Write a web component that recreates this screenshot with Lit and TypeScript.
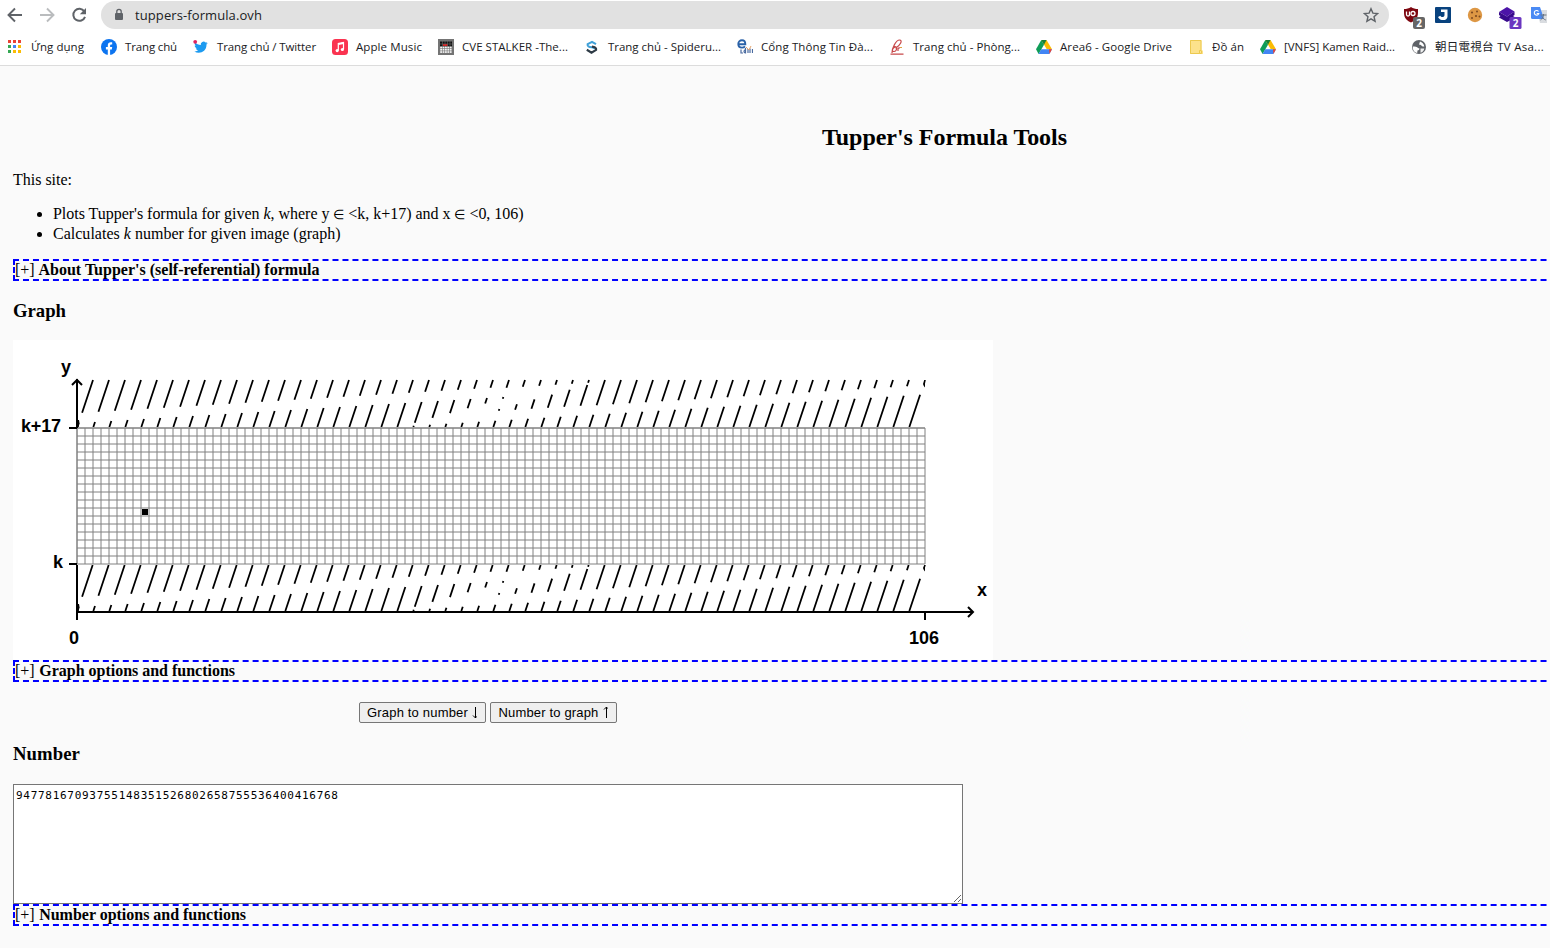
import { LitElement, html, svg, css } from "lit";
import { customElement, property } from "lit/decorators.js";

/** Inline text whose letter spacing is tuned so that it fills a given width. */
@customElement("fit-text")
class FitText extends LitElement {
  @property({ type: Number }) w = 0;
  static styles = css`
    :host { display: inline-block; white-space: nowrap; }
  `;
  firstUpdated() {
    const natural = this.getBoundingClientRect().width;
    const count = (this.textContent ?? "").length || 1;
    this.style.letterSpacing = `${((this.w - natural) / count).toFixed(4)}px`;
  }
  render() {
    return html`<slot></slot>`;
  }
}

const drive = svg`
  <path d="M5.3 1h5.2L16 10.3h-5.2z" fill="#fbbc04"/>
  <path d="M5.3 1 0 10.3 2.6 15 8 5.8z" fill="#0f9d58"/>
  <path d="M5.2 10.3H16L13.4 15H2.6z" fill="#4285f4"/>
  <path d="M13 10.3h3L13.4 15z" fill="#ea4335"/>
  <path d="M5.3 1h5.2L8 5.8z" fill="#188038"/>`;

const icons = {
  apps: svg`${[0, 1, 2].map((r) => [0, 1, 2].map((c) => svg`<rect x=${1 + c * 5} y=${1 + r * 5} width="3" height="3"
    fill=${[["#ea4335", "#ea4335", "#ea4335"], ["#34a853", "#4285f4", "#fbbc04"], ["#34a853", "#fbbc04", "#fbbc04"]][r][c]}/>`))}`,
  facebook: svg`<circle cx="8" cy="8" r="8" fill="#0c74f0"/>
    <path d="M6.8 16v-5.5H4.9V8.1h1.9V6.5c0-2.1 1.2-3.2 3-3.2.8 0 1.4.1 1.4.1v2h-.9c-1 0-1.2.6-1.2 1.2v1.5h2.1l-.4 2.4H9.1V16z" fill="#fff"/>`,
  twitter: svg`<path d="M14.8 3.9c-.5.3-1 .4-1.6.5.6-.4.9-.9 1.1-1.5-.5.3-1.1.5-1.7.6a2.8 2.8 0 0 0-4.8 2.5C5.6 5.9 3.6 4.9 2.1 3.2c-.8 1.4-.4 3 .8 3.8-.5 0-.9-.1-1.2-.4 0 1.4 1 2.5 2.3 2.8-.5.1-.9.1-1.2 0 .4 1.1 1.4 1.9 2.6 1.900-1.1.9-2.6 1.300-4.1 1.100 4.800 2.900 12.200.8 12.200-7 .5-.4 1-.9 1.300-1.500z" fill="#1d9bf0"/>
    <circle cx="2.2" cy="2.800" r="1.900" fill="#e0245e"/>`,
  music: svg`<rect width="16" height="16" rx="3.500" fill="#fa3350"/>
    <path d="M6.300 11.500V4.600l5.200-1.200v6.800" fill="none" stroke="#fff" stroke-width="1.200"/><path d="M6.300 5.300l5.200-1.200" stroke="#fff" stroke-width="1.600"/>
    <circle cx="5.200" cy="11.600" r="1.600" fill="#fff"/><circle cx="10.400" cy="10.500" r="1.600" fill="#fff"/>`,
  cve: svg`<rect width="16" height="16" fill="#747474"/>
    <rect x="2" y="2.500" width="12" height="5" fill="#111"/><rect x="5" y="5" width="4.500" height="2" fill="#d11"/>
    <path d="M4.500 2v12M7 2v12M9.500 2v12M12 2v12M2 5h12" stroke="#777" stroke-width=".5"/>
    ${[0, 1, 2].map((r) => [0, 1, 2, 3, 4].map((c) => svg`<rect x=${2.2 + c * 2.4} y=${7.6 + r * 2.3} width="1.800" height="1.700" fill="#f4f4f4"/>`))}`,
  spider: svg`<path d="M12 5.200 8 2.800 3.600 5.200c-.4 2 1.200 2.800 4.200 3l3.500 1.500" fill="none" stroke="#3fa0d8" stroke-width="2"/>
    <path d="M2.800 10.800 7.500 13.600l4.600-2.700c.4-2-1.200-2.800-4.200-3.200" fill="none" stroke="#2e3b46" stroke-width="2.200"/>`,
  eduport: svg`<path d="M2 5.200h6.300C8.300 2.500 7.200 1.200 5 1.200 2.800 1.200 1.300 3 1.300 5s1.500 3.600 3.700 3.600c1.300 0 2.300-.5 3-1.300" fill="none" stroke="#2b62a8" stroke-width="1.900"/>
    <path d="M4 10.500v3.500h2M8.500 10.500c-2 .5-2 3.500 0 3.500V9M11 10v4M13 9.500v4.500M15.500 10v4" fill="none" stroke="#4a6ba0" stroke-width="1.200"/><path d="M9 8l3 3 2-4" stroke="#e5a36c" fill="none"/>`,
  phong: svg`<path d="M3 14C3 9 7 1 10.500 1S11.500 6 6.500 9.300M4.500 8c4-2 4 4.500.5 4.500S4 9 6 8M9 12V9.500c1-1 2-.5 2-.5M1.500 15.200h13" fill="none" stroke="#c8494b" stroke-width="1.200"/><path d="M11 8.500h2" stroke="#e0a040"/>`,
  drive,
  folder: svg`<path d="M2 1h11.500v10.500H15V15H2z" fill="#fde38d"/><path d="M2.500 1.500h10.500v10h-1.500v3H2.500z" fill="#fce28c" stroke="#ecc94f"/><path d="M11.500 14.500h2v-3" stroke="#ecc94f" fill="none"/>`,
  globe: svg`<circle cx="8" cy="8" r="7" fill="#5f6368"/>
    <path d="M9 2.500c2 .5 4 2.500 4.300 5-1.800.2-3-.5-3.300-1.500L8 5.500zM1.800 7.500c2 0 4.700.3 5.200 1.500l1.500.5-.5 1.500-1.500.5-.3 2.500C3.500 13.500 1.500 11 1.800 7.500z" fill="#fff"/>
    <path d="M9.500 9.500h3.800c-.3 2-1.800 3.700-3.800 4.300z" fill="#fff" opacity=".9"/>`,
};

type Mark = { icon: keyof typeof icons; label: string; w: number };
const marks: Mark[] = [
  { icon: "apps", label: "Ứng dụng", w: 53 },
  { icon: "facebook", label: "Trang chủ", w: 52 },
  { icon: "twitter", label: "Trang chủ / Twitter", w: 99 },
  { icon: "music", label: "Apple Music", w: 66 },
  { icon: "cve", label: "CVE STALKER -The...", w: 106 },
  { icon: "spider", label: "Trang chủ - Spideru...", w: 113 },
  { icon: "eduport", label: "Cổng Thông Tin Đà...", w: 112 },
  { icon: "phong", label: "Trang chủ - Phòng...", w: 107 },
  { icon: "drive", label: "Area6 - Google Drive", w: 112 },
  { icon: "folder", label: "Đồ án", w: 32 },
  { icon: "drive", label: "[VNFS] Kamen Raid...", w: 111 },
  { icon: "globe", label: "朝日電視台 TV Asa...", w: 109 },
];

@customElement("browser-bar")
class BrowserBar extends LitElement {
  static styles = css`
    :host { display: block; height: 65px; background: #fff; border-bottom: 1px solid #dcdcdc; font-family: "Open Sans", "Noto Sans CJK TC", sans-serif; color: #202124; }
    svg { display: block; flex: none; }
    .nav { display: flex; align-items: center; height: 30px; padding-left: 7px; }
    .arrows { display: flex; gap: 16px; width: 94px; flex: none; }
    .pill { display: flex; align-items: center; width: 1288px; height: 28px; border-radius: 14px; background: #e1e1e1; box-sizing: border-box; padding: 0 10px 0 12px; flex: none; font-size: 13px; }
    .lock { margin-right: 10px; }
    .url { flex: 1; line-height: 20px; padding-bottom: 1px; }
    .ext { display: grid; grid-template-columns: 32px 32px 32px 32px 16px; margin-left: 14px; flex: none; }
    .marks { display: grid; grid-template-columns: 94px 92px 139px 106px 146px 153px 152px 147px 152px 72px 151px 140px; padding-left: 7px; height: 34px; align-items: center; font-size: 11.5px; }
    .mark { display: flex; align-items: center; gap: 8px; }
    .badge { font: bold 10px "Open Sans", sans-serif; }
  `;
  render() {
    return html`
      <div class="nav">
        <div class="arrows">
          <svg width="16" height="16" fill="none" stroke="#5f6368" stroke-width="1.900"><path d="M15 8H2M8 1.500 1.500 8 8 14.500"/></svg>
          <svg width="16" height="16" fill="none" stroke="#babcbe" stroke-width="1.900"><path d="M1 8h13M8 1.500 14.500 8 8 14.500"/></svg>
          <svg width="16" height="16"><path d="M13.300 4.400A6 6 0 1 0 14 9.800" fill="none" stroke="#5f6368" stroke-width="2"/><path d="M15 1v6.200H8.800z" fill="#5f6368"/></svg>
        </div>
        <div class="pill">
          <svg class="lock" width="12" height="14"><rect x="2" y="5" width="8" height="7" rx="1" fill="#5f6368"/><path d="M3.800 5.500V3.500a2.200 2.200 0 0 1 4.400 0v2" fill="none" stroke="#5f6368" stroke-width="1.300"/></svg>
          <div class="url"><fit-text .w=${127}>tuppers-formula.ovh</fit-text></div>
          <svg width="16" height="16"><path d="M8 1.700l1.900 4.400 4.700.4-3.600 3.200 1.100 4.700L8 11.900l-4.100 2.500L5 9.700 1.400 6.500l4.700-.4z" fill="none" stroke="#5f6368" stroke-width="1.400"/></svg>
        </div>
        <div class="ext">
          <svg width="24" height="30" viewBox="0 -7 24 30"><path d="M8 0c2 1.500 4.500 2 7 2 0 6 .5 10-7 13.500C.5 12 1 8 1 2c2.500 0 5-.5 7-2z" fill="#7d0710"/><path d="M3.500 4.500v3c0 2 3 2 3 0v-3" fill="none" stroke="#fff" stroke-width="1.300"/><circle cx="10" cy="6.500" r="2" fill="none" stroke="#fff" stroke-width="1.300"/><rect x="10" y="10" width="12" height="12" rx="2" fill="#666"/><text class="badge" x="16" y="19.600" text-anchor="middle" fill="#fff">2</text></svg>
          <svg width="16" height="30" viewBox="0 -7 16 30"><rect width="16" height="16" rx="1" fill="#08427e"/><path d="M6 2.500h6.500v7c0 5-8 4.500-9.500.4l2.300-1.200c.8 2 4.200 1.800 4.200-.8V5H6z" fill="#fff"/></svg>
          <svg width="16" height="30" viewBox="0 -7 16 30"><circle cx="8" cy="8" r="7.200" fill="#dd9744"/><g fill="#7d4a20"><circle cx="5" cy="5.500" r="1.100"/><circle cx="10" cy="4.500" r="1"/><circle cx="9" cy="9" r="1.100"/><circle cx="5" cy="11" r="1"/><circle cx="12.500" cy="9.500" r="1"/></g></svg>
          <svg width="24" height="30" viewBox="0 -7 24 30"><path d="M8 0 15.500 4.500 8 9.500 0 5z" fill="#4c14a8"/><path d="M0 5l8 4.500 7.500-5V8L14 9l1.500 1v1L8 15 0 10.500l1.500-1.500L0 8z" fill="#380a8c"/><rect x="10.500" y="10" width="12" height="12" rx="1.500" fill="#6a36c0"/><text class="badge" x="16.500" y="19.600" text-anchor="middle" fill="#fff">2</text></svg>
          <svg width="16" height="30" viewBox="0 -7 16 30"><path d="M6 3h10v13H9z" fill="#d9dce0"/><path d="M0 0h9l4 12H1.500Q0 12 0 10.500z" fill="#4a8af4"/><path d="M7.500 4.500a2.300 2.300 0 1 0 .3 2H5.700" fill="none" stroke="#fff" stroke-width="1.100"/><path d="M9.500 8h6M12.500 7v1c0 2-1.500 4-3 5M10.800 9.500c1 1.500 2.200 3 4 3.500" fill="none" stroke="#6b7580"/></svg>
        </div>
      </div>
      <div class="marks">
        ${marks.map((m) => html`<div class="mark"><svg width="16" height="16">${icons[m.icon]}</svg><fit-text .w=${m.w}>${m.label}</fit-text></div>`)}
      </div>`;
  }
}

/** Stroke pieces of the hatched bands above and below the plotted range; y counts from the band's top. */
function hatch(top: number, from: number, to: number) {
  const parts: string[] = [];
  for (let n = 0; n <= 52; n++) {
    const piece = (a: number, b: number) => {
      a = Math.max(a, from);
      b = Math.min(b, to);
      if (b - a < 0.3) return;
      const x = (y: number) => (80 + 16 * n - y / 3).toFixed(2);
      parts.push(`M${x(a)} ${(top + a).toFixed(2)}L${x(b)} ${(top + b).toFixed(2)}`);
    };
    if (n < 32) piece(0, n < 26 ? 32.7 - n : 33.7 - n);
    else if (n < 52) piece(0, 57.2 - n);
    if (n <= 26) piece(43 - n, n < 21 ? 99 : 42.7 - 4.8 * (n - 21));
    if (n >= 26 && n <= 31) piece(5 + 4.8 * (31 - n), 56.7 - n);
    if (n >= 21) piece(66.7 - n, 99);
  }
  return parts.join("");
}

@customElement("tupper-graph")
class TupperGraph extends LitElement {
  static styles = css`
    :host { display: block; width: 980px; height: 320px; background: #fff; }
    svg { display: block; }
    .grid { stroke: #808080; stroke-width: 1; }
    .axis { fill: none; stroke: #000; stroke-width: 2; }
    .hatch { fill: none; stroke: #000; stroke-width: 1.8; }
    text { font: bold 18px "Liberation Sans", Arial, sans-serif; }
  `;
  render() {
    const cols = Array.from({ length: 107 }, (_, i) => 64 + i * 8);
    const rows = Array.from({ length: 18 }, (_, i) => 88 + i * 8);
    return html`<svg width="980" height="320">
      <path class="hatch" d=${hatch(40, 0, 47)}/>
      <path class="hatch" d=${hatch(224, 1, 47)}/>
      <path d="M65 80h1l.5 3-.8 4H65zM65 264h1l.5 3-.8 4H65z"/>
      <path d="M911.200 40h1.600l-.8 3.500v4l-1.200-1.500-.8-2zM911.200 225h1.600l-.8 2.500v4l-1.200-1.500-.8-2z"/>
      ${cols.map((x) => svg`<line class="grid" x1=${x} y1="88" x2=${x} y2="224"/>`)}
      ${rows.map((y) => svg`<line class="grid" x1="64" y1=${y} x2="912" y2=${y}/>`)}
      <path class="grid" fill="none" d="M64 224V88H912"/>
      <rect x="129" y="169" width="6" height="6"/>
      <path class="axis" d="M64 88V39M59 45l5-5 5 5M56 88h8M56 224h8M64 225v55M63 272h897M955 267l5 5-5 5M912 272v8"/>
      <text x="48" y="33">y</text>
      <text x="8" y="92" textLength="40">k+17</text>
      <text x="40" y="228">k</text>
      <text x="56" y="304">0</text>
      <text x="896" y="304">106</text>
      <text x="964" y="256">x</text>
    </svg>`;
  }
}

@customElement("app-root")
class AppRoot extends LitElement {
  static styles = css`
    :host { display: block; width: 100%; height: 948px; overflow: hidden; background: #fafafa; color: #000; font: 16px/18px "Liberation Serif", "Times New Roman", serif; }
    .page { width: 1863px; padding: 57px 0 0 13px; }
    h2 { margin: 0 0 20px; font-size: 24px; line-height: 28px; text-align: center; }
    h3 { margin: 20px 0 19px; font-size: 18.72px; line-height: 20px; }
    p { margin: 0; }
    ul { margin: 15px 0; padding-left: 40px; line-height: 20px; }
    .in { font-size: 13px; line-height: 1; }
    .fold { border: 2px dashed #00f; height: 18px; font-weight: bold; }
    .sign { font-weight: normal; margin-right: 0.6px; }
    .buttons { display: flex; gap: 4px; margin: 20px 0 0 346px; }
    button { display: flex; align-items: center; justify-content: center; gap: 4px; width: 127px; height: 21px; padding: 0; box-sizing: border-box; border: 1px solid #767676; border-radius: 2px; background: #efefef; color: #000; font: 13px "Liberation Sans", Arial, sans-serif; }
    textarea { display: block; box-sizing: border-box; width: 950px; height: 120px; margin: 0; padding: 3px 2px 2px; border: 1px solid #767676; background: #fff; color: #000; font: 11px/16px "DejaVu Sans Mono", monospace; letter-spacing: 0.71px; resize: both; }
    .number { margin: 21px 0 20px; }
  `;
  fold(label: string, w: number) {
    return html`<div class="fold"><fit-text .w=${w}><span class="sign">[+]</span> ${label}</fit-text></div>`;
  }
  render() {
    return html`
      <browser-bar></browser-bar>
      <div class="page">
        <h2><fit-text .w=${245}>Tupper's Formula Tools</fit-text></h2>
        <p><fit-text .w=${59}>This site:</fit-text></p>
        <ul>
          <li><fit-text .w=${470.5}>Plots Tupper's formula for given <i>k</i>, where y <span class="in">∈</span> &lt;k, k+17) and x <span class="in">∈</span> &lt;0, 106)</fit-text></li>
          <li><fit-text .w=${287.5}>Calculates <i>k</i> number for given image (graph)</fit-text></li>
        </ul>
        ${this.fold("About Tupper's (self-referential) formula", 304.5)}
        <h3><fit-text .w=${53}>Graph</fit-text></h3>
        <tupper-graph></tupper-graph>
        ${this.fold("Graph options and functions", 220)}
        <div class="buttons">
          <button><fit-text .w=${101}>Graph to number</fit-text><svg width="6" height="13" fill="none" stroke="#000"><path d="M3.500 1v11M1 9.500l2.500 2.500 1-1.500"/></svg></button>
          <button><fit-text .w=${100}>Number to graph</fit-text><svg width="6" height="13" fill="none" stroke="#000"><path d="M3.500 12V1M1 3.500l2.500-2.500 1 1.500"/></svg></button>
        </div>
        <h3 class="number"><fit-text .w=${67}>Number</fit-text></h3>
        <textarea spellcheck="false" .value=${"94778167093755148351526802658755536400416768"}></textarea>
        ${this.fold("Number options and functions", 231)}
      </div>`;
  }
}
